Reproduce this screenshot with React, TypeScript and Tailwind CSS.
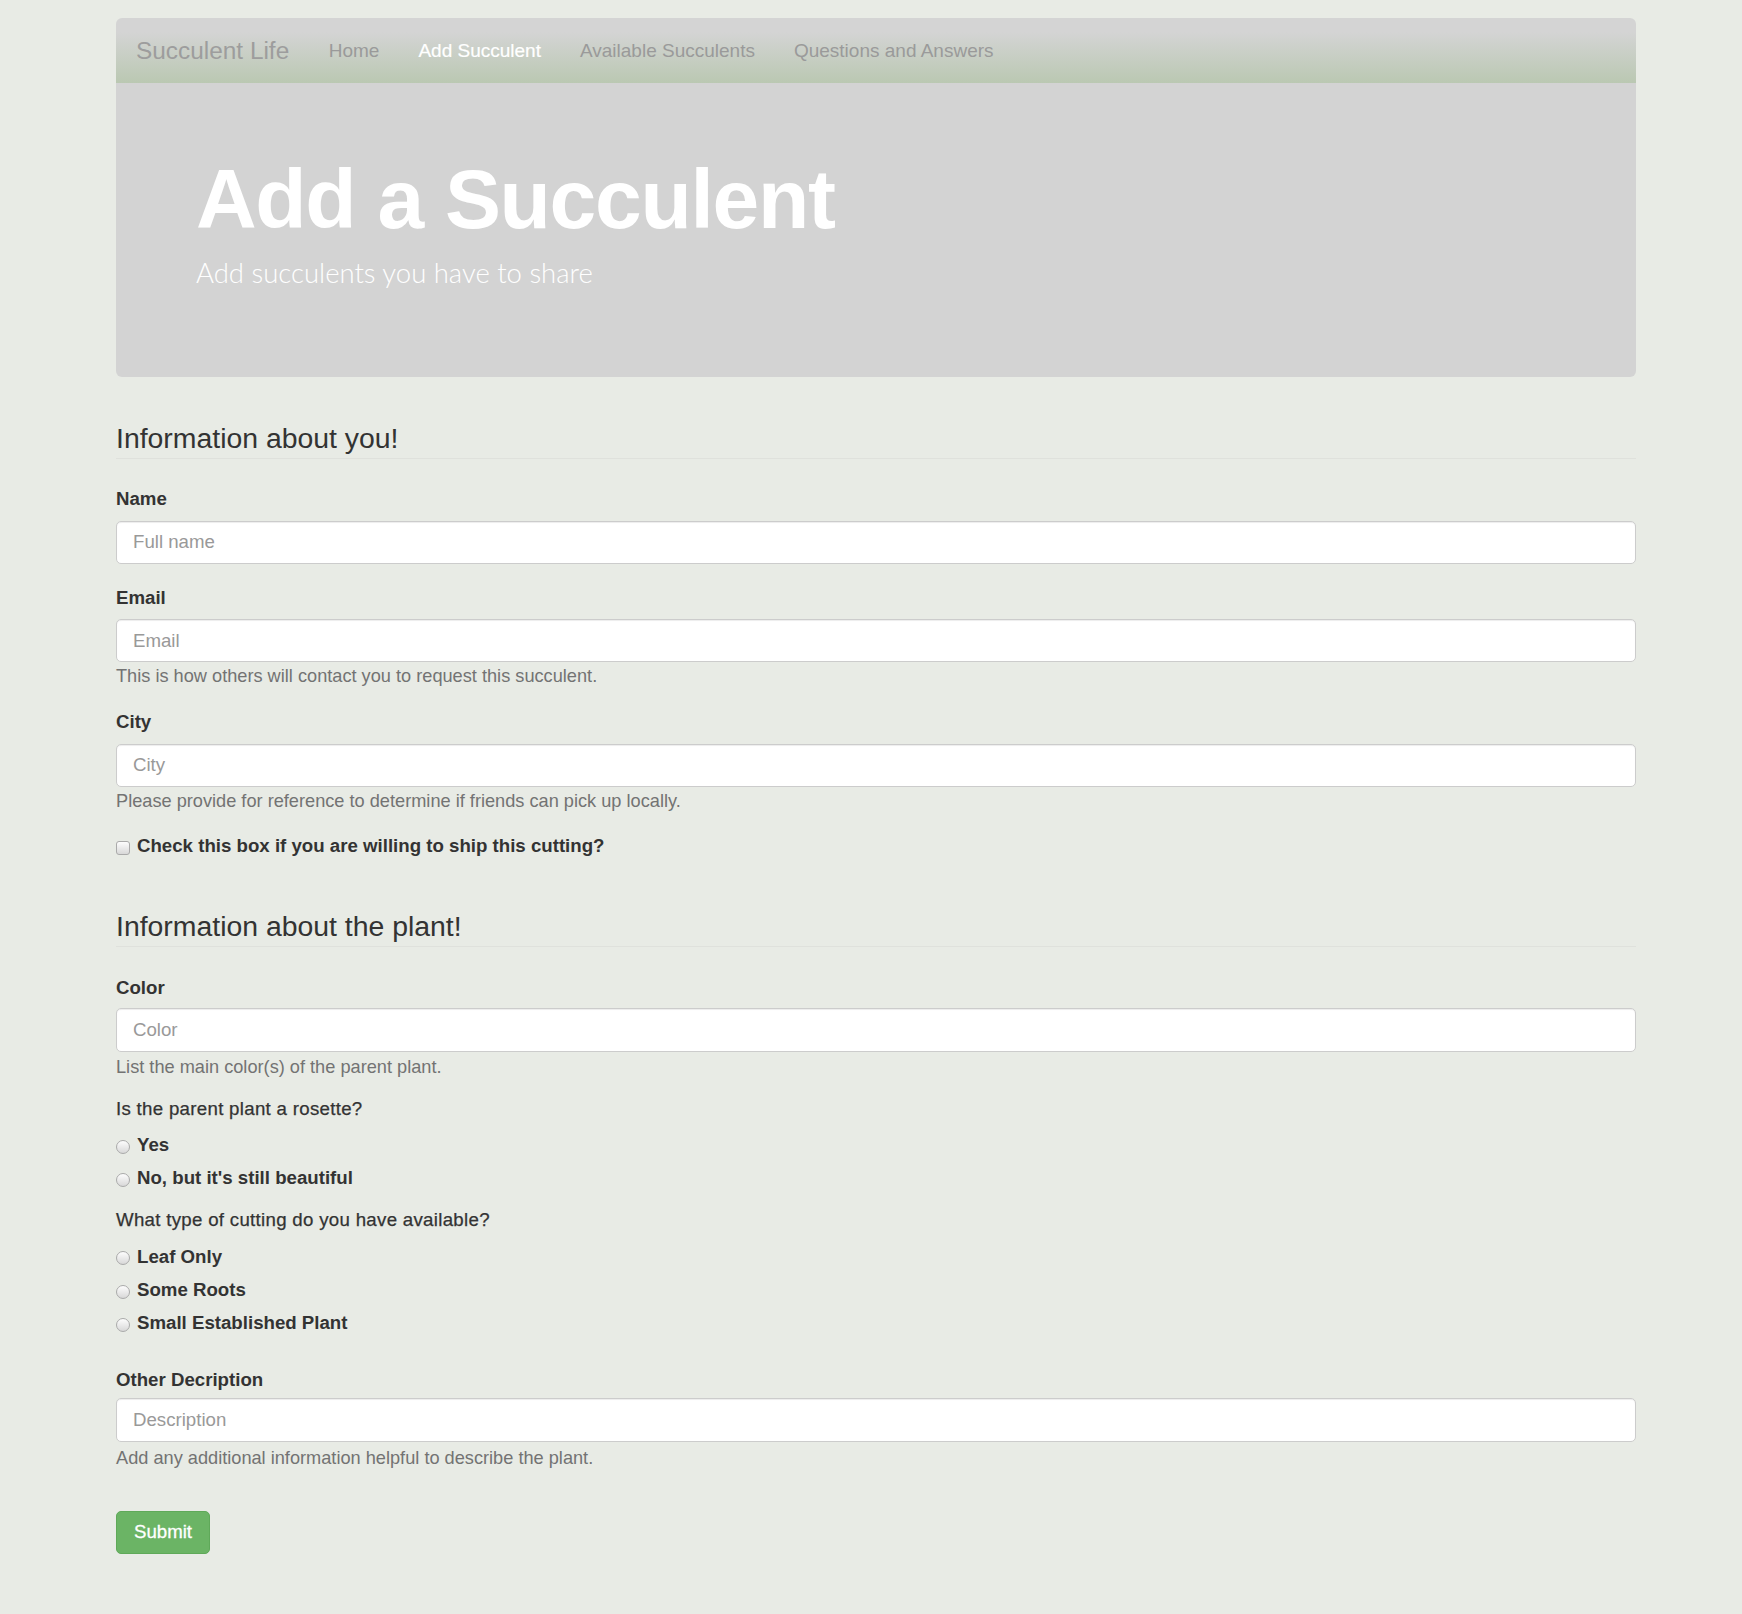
import React from "react";

type Field = { label: string; placeholder: string; help?: string; gap: string };

const navLinks = [
    { name: "Home", active: false },
    { name: "Add Succulent", active: true },
    { name: "Available Succulents", active: false },
    { name: "Questions and Answers", active: false },
];

const aboutYou: Field[] = [
    { label: "Name", placeholder: "Full name", gap: "mb-[21px]" },
    {
        label: "Email",
        placeholder: "Email",
        help: "This is how others will contact you to request this succulent.",
        gap: "mb-[19px]",
    },
    {
        label: "City",
        placeholder: "City",
        help: "Please provide for reference to determine if friends can pick up locally.",
        gap: "mb-[19px]",
    },
];

const rosette = ["Yes", "No, but it's still beautiful"];
const cuttings = ["Leaf Only", "Some Roots", "Small Established Plant"];

const inputClass =
    "block h-[43px] w-full rounded-[5px] border border-[#ccc] bg-white px-[16px] text-[18.67px] text-[#555] shadow-[inset_0_1px_1px_rgba(0,0,0,0.075)] outline-none placeholder:text-[#999]";
const labelClass = "block text-[18.67px] font-bold leading-[26.67px] text-[#333]";
const helpClass = "text-[18.2px] leading-[26.67px] text-[#737373]";
const questionClass =
    "text-[18.67px] leading-[26.67px] tracking-[0.3px] text-[#333] [-webkit-text-stroke:0.25px_#333]";

function TextField({ field }: { field: Field }) {
    return (
        <div className={field.gap}>
            <label className={`mb-[8px] ${labelClass}`}>{field.label}</label>
            <input type="text" placeholder={field.placeholder} className={inputClass} />
            {field.help && <p className={`mt-[1px] ${helpClass}`}>{field.help}</p>}
        </div>
    );
}

function Legend({ children }: { children: React.ReactNode }) {
    return (
        <div className="h-[41px] border-b border-[#dfe1dc] text-[28.4px] leading-[40px] text-[#333]">
            {children}
        </div>
    );
}

function Radio({ name, label, last }: { name: string; label: string; last?: boolean }) {
    return (
        <label className={`flex items-center gap-[7px] text-[18.67px] font-bold leading-[26.67px] text-[#333] ${last ? "" : "mb-[6.5px]"}`}>
            <input
                type="radio"
                name={name}
                className="mt-[3px] h-[14px] w-[14px] shrink-0 appearance-none rounded-full border border-[#aaa] bg-[linear-gradient(to_bottom,#fdfdfd,#d8d8d8)]"
            />
            {label}
        </label>
    );
}

export default function App() {
    return (
        <div className="min-h-screen bg-[#e8ebe5] pb-[61px] pt-[18px] font-['Liberation_Sans',Arial,sans-serif]">
            <div className="ml-[116px] w-[1520px]">
                <nav className="flex h-[65px] items-center rounded-t-[6px] bg-[linear-gradient(to_bottom,#d4d4d4_22%,#bac8b2)] pl-[20px] pt-[2px]">
                    <span className="pr-[20px] text-[24.4px] text-[#9d9d9d]">Succulent Life</span>
                    {navLinks.map((link) => (
                        <span
                            key={link.name}
                            className={`px-[19.5px] text-[19px] ${link.active ? "text-white [-webkit-text-stroke:0.2px_white]" : "text-[#9a9a9a]"}`}
                        >
                            {link.name}
                        </span>
                    ))}
                </nav>

                <header className="h-[294px] rounded-b-[6px] bg-[#d3d3d3] pl-[80px] pt-[74px] text-white">
                    <h1 className="text-[84px] font-bold leading-none tracking-[-1.3px]">Add a Succulent</h1>
                    <p className="mt-[12px] font-['Lato',sans-serif] text-[27.5px] font-light leading-[40px]">
                        Add succulents you have to share
                    </p>
                </header>

                <form className="mt-[41px]">
                    <div className="mb-[27px]">
                        <Legend>Information about you!</Legend>
                    </div>
                    {aboutYou.map((field) => (
                        <TextField key={field.label} field={field} />
                    ))}
                    <label className="flex items-center gap-[7px] text-[18.67px] font-bold leading-[26.67px] text-[#333]">
                        <input
                            type="checkbox"
                            className="mt-[2px] h-[14px] w-[14px] shrink-0 appearance-none rounded-[3px] border border-[#aaa] bg-[linear-gradient(to_bottom,#fdfdfd,#d8d8d8)]"
                        />
                        Check this box if you are willing to ship this cutting?
                    </label>

                    <div className="mb-[28px] mt-[46px]">
                        <Legend>Information about the plant!</Legend>
                    </div>
                    <div className="mb-[16px]">
                        <label className={`mb-[6px] ${labelClass}`}>Color</label>
                        <input type="text" placeholder="Color" className={`${inputClass} !h-[44px]`} />
                        <p className={`mt-[2px] ${helpClass}`}>List the main color(s) of the parent plant.</p>
                    </div>

                    <p className={`mb-[9px] ${questionClass}`}>Is the parent plant a rosette?</p>
                    {rosette.map((r, i) => (
                        <Radio key={r} name="rosette" label={r} last={i === rosette.length - 1} />
                    ))}

                    <p className={`mb-[10px] mt-[15px] ${questionClass}`}>What type of cutting do you have available?</p>
                    {cuttings.map((c, i) => (
                        <Radio key={c} name="cutting" label={c} last={i === cuttings.length - 1} />
                    ))}

                    <div className="mt-[30px]">
                        <label className={`mb-[5px] ${labelClass}`}>Other Decription</label>
                        <input type="text" placeholder="Description" className={`${inputClass} !h-[44px]`} />
                        <p className={`mt-[3px] ${helpClass}`}>
                            Add any additional information helpful to describe the plant.
                        </p>
                    </div>

                    <button
                        type="button"
                        className="mt-[39px] h-[43px] w-[94px] rounded-[5px] border border-[#5fa959] bg-[#6bb465] text-[18.67px] text-white [-webkit-text-stroke:0.3px_white]"
                    >
                        Submit
                    </button>
                </form>
            </div>
        </div>
    );
}
